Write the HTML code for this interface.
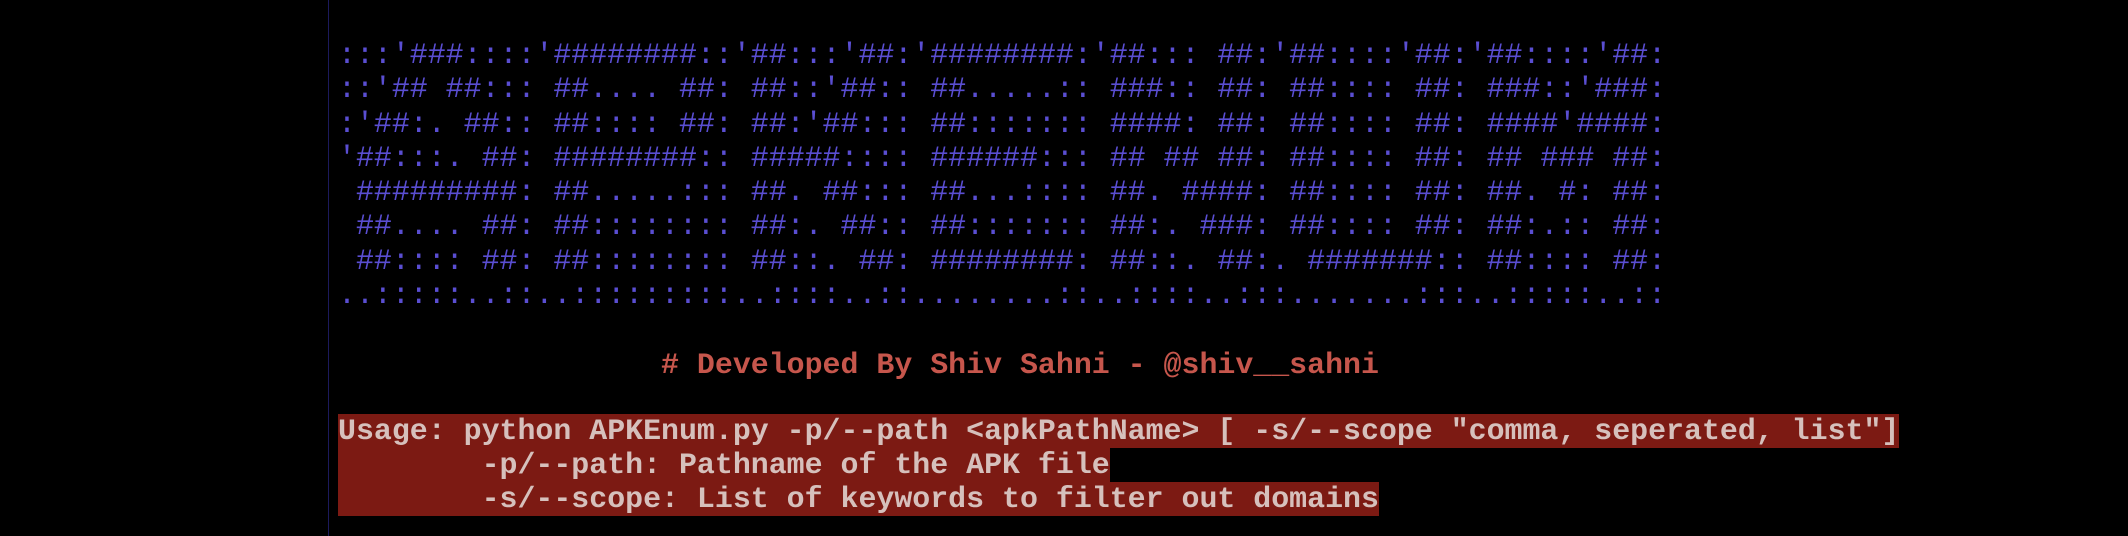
<!DOCTYPE html>
<html><head><meta charset="utf-8"><style>
html,body{margin:0;padding:0;background:#000;width:2128px;height:536px;overflow:hidden;}
.b{position:absolute;left:328px;top:0;width:1px;height:536px;background:#1c1a5c;}
pre{margin:0;position:absolute;left:338px;font-family:"Liberation Mono",monospace;font-size:29.92px;white-space:pre;}
.art{top:38px;line-height:34.3px;color:#5a4ed2;}
.dev{top:348px;line-height:34px;color:#c6564c;font-weight:bold;}
.use{top:414px;line-height:34px;color:#d6c0bc;font-weight:bold;}
.use span{background:#7c1a13;}
</style></head><body>
<div class="b"></div>
<pre class="art">:::'###::::'########::'##:::'##:'########:'##::: ##:'##::::'##:'##::::'##:
::'## ##::: ##.... ##: ##::'##:: ##.....:: ###:: ##: ##:::: ##: ###::'###:
:'##:. ##:: ##:::: ##: ##:'##::: ##::::::: ####: ##: ##:::: ##: ####'####:
'##:::. ##: ########:: #####:::: ######::: ## ## ##: ##:::: ##: ## ### ##:
 #########: ##.....::: ##. ##::: ##...:::: ##. ####: ##:::: ##: ##. #: ##:
 ##.... ##: ##:::::::: ##:. ##:: ##::::::: ##:. ###: ##:::: ##: ##:.:: ##:
 ##:::: ##: ##:::::::: ##::. ##: ########: ##::. ##:. #######:: ##:::: ##:
..:::::..::..:::::::::..::::..::........::..::::..:::.......:::..:::::..::</pre>
<pre class="dev">                  # Developed By Shiv Sahni - @shiv__sahni</pre>
<pre class="use"><span>Usage: python APKEnum.py -p/--path &lt;apkPathName&gt; [ -s/--scope "comma, seperated, list"]</span>
<span>        -p/--path: Pathname of the APK file</span>
<span>        -s/--scope: List of keywords to filter out domains</span></pre>
</body></html>
